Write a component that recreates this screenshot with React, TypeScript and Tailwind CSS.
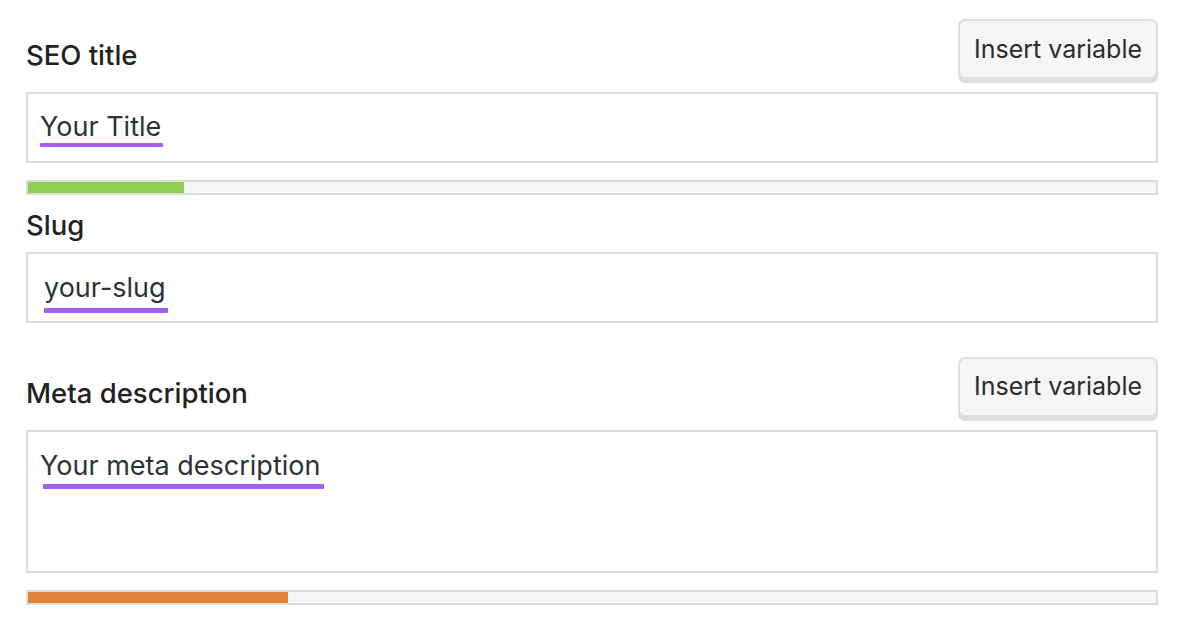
import React from "react";

const font = { fontFamily: "Inter, 'Noto Sans', sans-serif" };

function InsertButton() {
  return (
    <button className="h-[60px] w-[200px] rounded-[7px] border-2 border-[#dedede] bg-[#f6f6f6] text-[25px] text-[#2c2c2c] shadow-[0_4px_0_#dedede] leading-none">
      Insert variable
    </button>
  );
}

function Underlined({ children, cls }: { children: React.ReactNode; cls: string }) {
  return (
    <span className="relative inline-block">
      {children}
      <span className={"absolute rounded-[1px] bg-[#a45cff] " + cls} />
    </span>
  );
}

function Bar({ width, color }: { width: number; color: string }) {
  return (
    <div className="h-[15px] w-full border-2 border-[#dcdcdc] bg-[#f6f6f6]">
      <div className={"h-full " + color} style={{ width }} />
    </div>
  );
}

export default function App() {
  return (
    <div className="min-h-[632px] w-[1178px] bg-white" style={font}>
      <div className="ml-[26px] w-[1132px] pt-[19px]">
        {/* SEO title */}
        <div className="flex items-end justify-between">
          <div className="pb-[10px] text-[27.5px] font-medium leading-none text-[#222]">SEO title</div>
          <InsertButton />
        </div>
        <div className="mt-[13px] h-[71px] border-2 border-[#dcdcdc] bg-white pl-[12px] pt-[19px] text-[27px] leading-none text-[#2c3338]">
          <Underlined cls="h-[4px] left-0 right-[-2px] bottom-[-7px]">Your Title</Underlined>
        </div>
        <div className="mt-[17px]">
          <Bar width={156} color="bg-[#8fcf50]" />
        </div>

        {/* Slug */}
        <div className="mt-[17px] text-[27.5px] font-medium leading-none text-[#222]">Slug</div>
        <div className="mt-[12px] h-[71px] border-2 border-[#dcdcdc] bg-white pl-[16px] pt-[20px] text-[27px] leading-none text-[#2c3338]">
          <Underlined cls="h-[5px] left-0 right-[-2px] bottom-[-12px]">your-slug</Underlined>
        </div>

        {/* Meta description */}
        <div className="mt-[34px] flex items-end justify-between">
          <div className="pb-[9px] text-[27.5px] font-medium leading-none text-[#222]">Meta description</div>
          <InsertButton />
        </div>
        <div className="mt-[13px] h-[143px] border-2 border-[#dcdcdc] bg-white pl-[12px] pt-[20px] text-[27px] leading-none text-[#2c3338]">
          <Underlined cls="h-[5px] left-[3px] right-[-4px] bottom-[-10px]">Your meta description</Underlined>
        </div>
        <div className="mt-[17px]">
          <Bar width={260} color="bg-[#e08237]" />
        </div>
      </div>
    </div>
  );
}
